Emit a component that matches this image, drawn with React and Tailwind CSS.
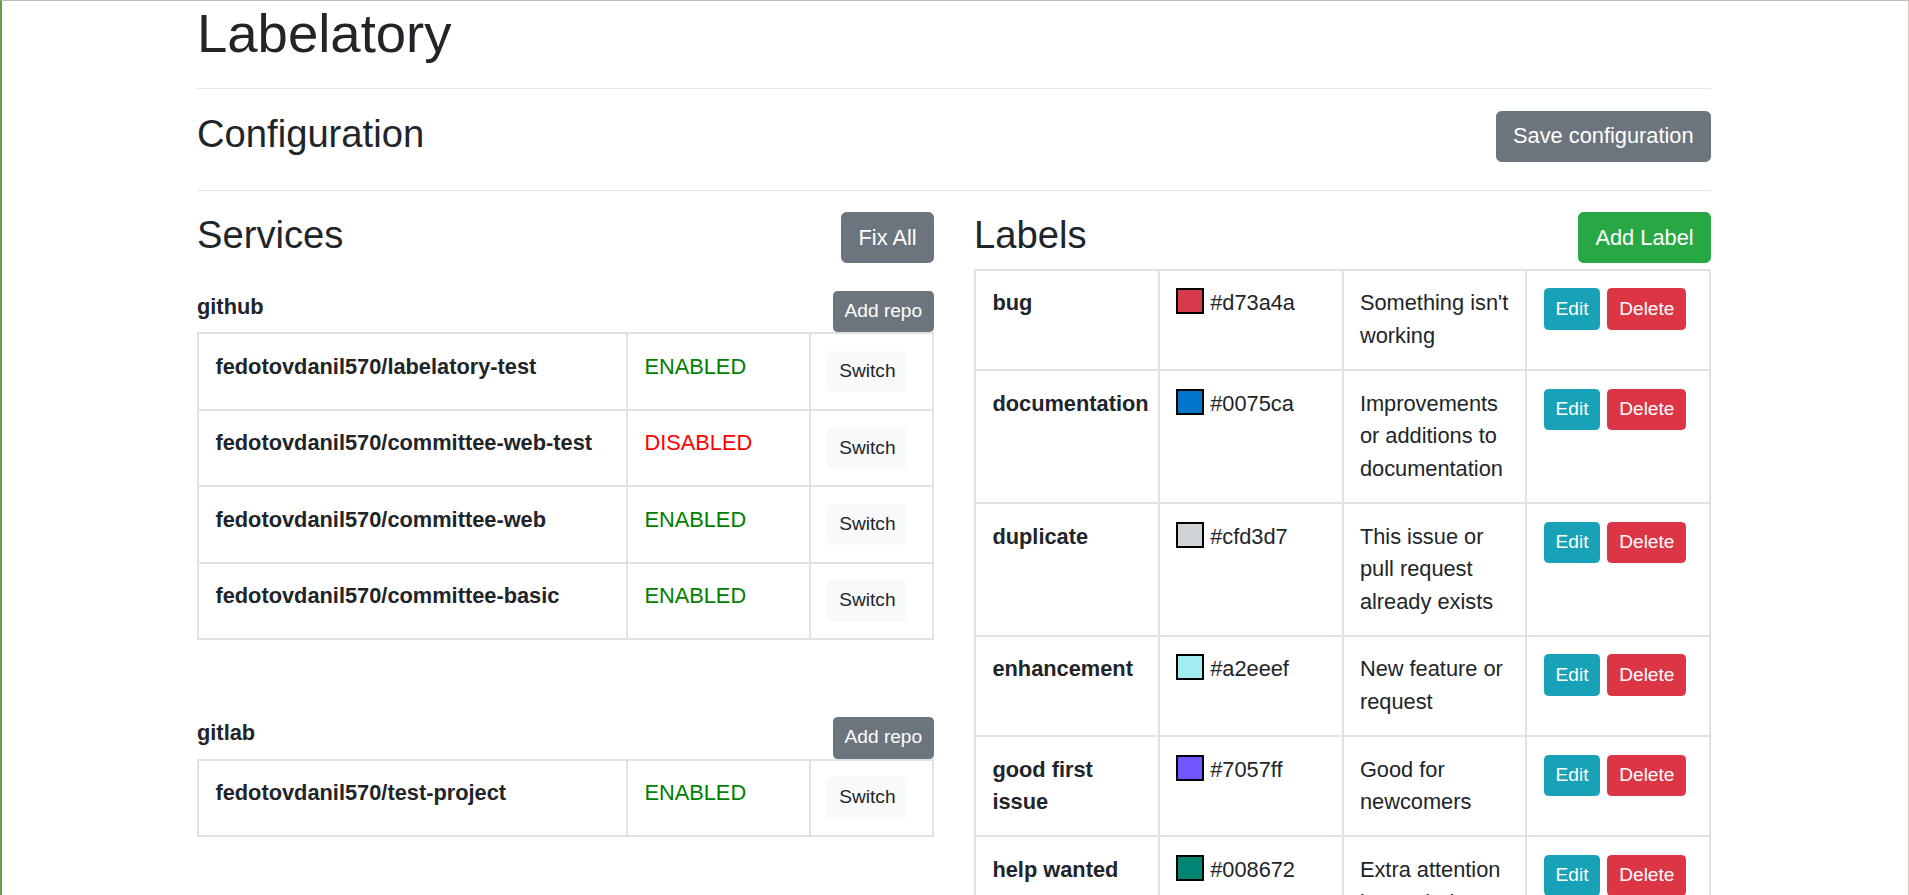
import React from "react";

// Bootstrap-ish page rendered at ~136% zoom, so every size is rem * 21.8px
const btn = "inline-block border rounded-[5.5px] px-[16.4px] py-[8.2px] text-[21.8px] leading-[32.7px] whitespace-nowrap";
const btnSm = "inline-block border rounded-[4.4px] px-[10.9px] py-[5.5px] text-[19.1px] leading-[28.6px] whitespace-nowrap";

const services = [
  {
    name: "github",
    repos: [
      { repo: "fedotovdanil570/labelatory-test", on: true },
      { repo: "fedotovdanil570/committee-web-test", on: false },
      { repo: "fedotovdanil570/committee-web", on: true },
      { repo: "fedotovdanil570/committee-basic", on: true },
    ],
  },
  {
    name: "gitlab",
    repos: [{ repo: "fedotovdanil570/test-project", on: true }],
  },
];

const labels = [
  { name: "bug", color: "#d73a4a", desc: "Something isn't working" },
  { name: "documentation", color: "#0075ca", desc: "Improvements or additions to documentation" },
  { name: "duplicate", color: "#cfd3d7", desc: "This issue or pull request already exists" },
  { name: "enhancement", color: "#a2eeef", desc: "New feature or request" },
  { name: "good first issue", color: "#7057ff", desc: "Good for newcomers" },
  { name: "help wanted", color: "#008672", desc: "Extra attention is needed" },
  { name: "invalid", color: "#e4e669", desc: "This doesn't seem right" },
  { name: "question", color: "#d876e3", desc: "Further information is requested" },
  { name: "wontfix", color: "#ffffff", desc: "This will not be worked on" },
];

const td = "border-2 border-[#dee2e6] px-[16.4px] py-[16.4px] align-top";

function SectionHead({ title, children }) {
  return (
    <div className="flex justify-between items-start">
      <h3 className="text-[38.2px] leading-[45.8px] font-normal mb-[10.9px]">{title}</h3>
      {children}
    </div>
  );
}

function Service({ service, className }) {
  return (
    <div className={className}>
      <div className="flex justify-between items-start">
        <span className="font-bold">{service.name}</span>
        <button className={`${btnSm} bg-[#6c757d] border-[#6c757d] text-white`}>Add repo</button>
      </div>
      <table className="w-full table-fixed border-collapse">
        <colgroup>
          <col className="w-[429px]" />
          <col className="w-[183px]" />
          <col className="w-[123px]" />
        </colgroup>
        <tbody>
          {service.repos.map((r) => (
            <tr key={r.repo}>
              <td className={`${td} font-bold`}>{r.repo}</td>
              <td className={`${td} ${r.on ? "text-[#008000]" : "text-[#ff0000]"}`}>
                {r.on ? "ENABLED" : "DISABLED"}
              </td>
              <td className={td}>
                <button className={`${btnSm} block bg-[#f8f9fa] border-[#f8f9fa] text-[#212529]`}>Switch</button>
              </td>
            </tr>
          ))}
        </tbody>
      </table>
    </div>
  );
}

export default function App() {
  return (
    <div
      className="h-[895px] overflow-hidden bg-white text-[#212529] text-[21.8px] leading-[32.7px] border-t border-t-[#bdbdbd] border-l-2 border-l-[#6f9a4a] border-r border-r-[#cfc6bd]"
      style={{ fontFamily: '"Liberation Sans", Arial, sans-serif' }}
    >
      <div className="w-[1514px] ml-[195px]">
        <h1 className="text-[54.5px] leading-[65.5px] font-normal">Labelatory</h1>
        <hr className="mt-[21.8px] mb-[21.8px] border-t border-[#e6e6e6]" />

        <SectionHead title="Configuration">
          <button className={`${btn} bg-[#6c757d] border-[#6c757d] text-white`}>Save configuration</button>
        </SectionHead>
        <hr className="mt-[21.8px] mb-[21.8px] border-t border-[#e6e6e6]" />

        <div className="grid grid-cols-[737px_737px] gap-x-[40px]">
          <div>
            <SectionHead title="Services">
              <button className={`${btn} bg-[#6c757d] border-[#6c757d] text-white`}>Fix All</button>
            </SectionHead>
            <Service service={services[0]} className="mt-[21.8px]" />
            <Service service={services[1]} className="mt-[77px]" />
          </div>

          <div>
            <SectionHead title="Labels">
              <button className={`${btn} bg-[#28a745] border-[#28a745] text-white`}>Add Label</button>
            </SectionHead>
            <table className="w-full table-fixed border-collapse">
              <tbody>
                {labels.map((l) => (
                  <tr key={l.name}>
                    <td className={`${td} font-bold`}>{l.name}</td>
                    <td className={td}>
                      <div className="flex items-start gap-[6px]">
                        <span
                          className="inline-block w-[28px] h-[26px] mt-[1px] border-2 border-black shrink-0"
                          style={{ backgroundColor: l.color }}
                        />
                        <span>{l.color}</span>
                      </div>
                    </td>
                    <td className={td}>{l.desc}</td>
                    <td className={td}>
                      <div className="flex gap-[7px] pt-[1px]">
                        <button className={`${btnSm} bg-[#17a2b8] border-[#17a2b8] text-white`}>Edit</button>
                        <button className={`${btnSm} bg-[#dc3545] border-[#dc3545] text-white`}>Delete</button>
                      </div>
                    </td>
                  </tr>
                ))}
              </tbody>
            </table>
          </div>
        </div>
      </div>
    </div>
  );
}
